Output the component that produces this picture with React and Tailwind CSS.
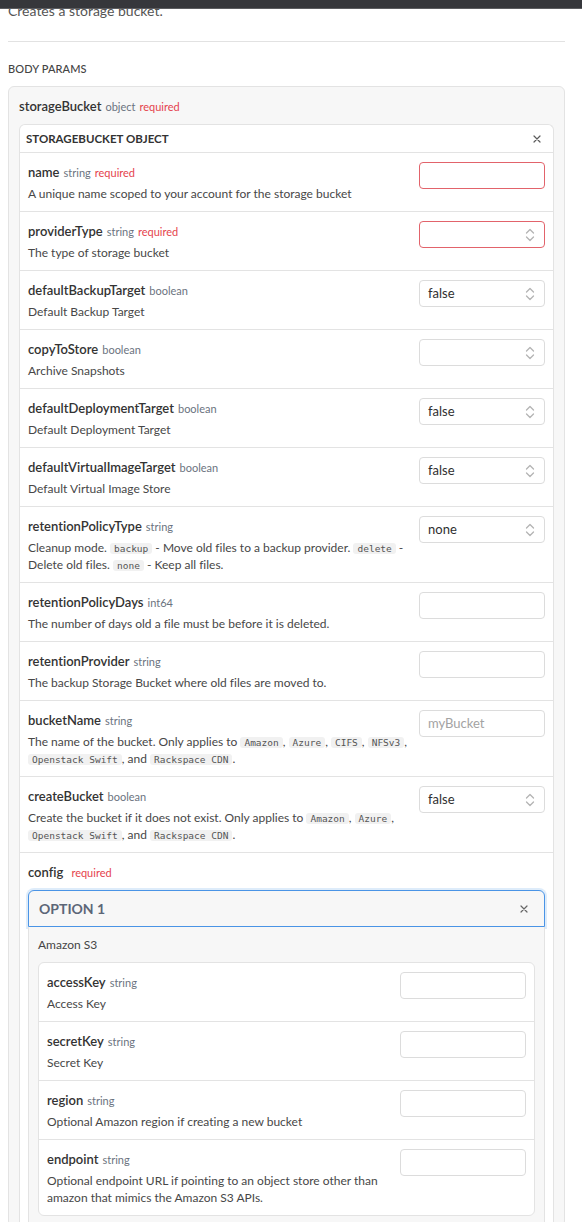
import React from "react";

const FONT = { fontFamily: "Lato, 'Open Sans', sans-serif" };

function Chevrons() {
  return (
    <svg width="10" height="14" viewBox="0 0 10 14" fill="none" stroke="#b4b4b4" strokeWidth="1.3" strokeLinecap="round" strokeLinejoin="round">
      <path d="M1.5 5 L5 1.5 L8.5 5" />
      <path d="M1.5 9 L5 12.5 L8.5 9" />
    </svg>
  );
}

function CloseX({ color = "#5b5b5b" }) {
  return (
    <svg width="8" height="8" viewBox="0 0 8 8" stroke={color} strokeWidth="1.2" strokeLinecap="round">
      <path d="M1 1 L7 7 M7 1 L1 7" />
    </svg>
  );
}

function Code({ children }) {
  return (
    <code
      className="rounded-[3px] bg-[#f1f1f1] px-[4px] py-0 text-[9.5px] leading-none text-[#555]"
      style={{ fontFamily: "'DejaVu Sans Mono', 'Liberation Mono', monospace" }}
    >
      {children}
    </code>
  );
}

function Field({ kind, value, placeholder, required }) {
  const border = required ? "border-[#e2636b]" : "border-[#dcdcdc]";
  return (
    <div
      className={`flex h-[27px] w-[126px] shrink-0 items-center justify-between rounded-[4px] border ${border} bg-white pl-[8px] pr-[9px]`}
    >
      {placeholder ? (
        <span className="text-[13px] text-[#a3a3a3]">{placeholder}</span>
      ) : (
        <span className="text-[13px] text-[#2f2f2f]">{value}</span>
      )}
      {kind === "select" && <Chevrons />}
    </div>
  );
}

function Title({ name, type, required, gap = "ml-[4px]" }) {
  return (
    <div className="h-[20px] text-[13px] leading-[20px]">
      <span className="font-semibold leading-none text-[#333]">{name}</span>
      {type && <span className="ml-[4px] text-[11px] leading-none text-[#6b7380]">{type}</span>}
      {required && <span className={`${gap} text-[11px] leading-none text-[#e5434d]`}>required</span>}
    </div>
  );
}

function Param({ name, type, required, children, field }) {
  return (
    <div className="flex items-start border-t border-[#e3e3e3] pb-[9px] pl-[8px] pr-[8px] pt-[9px]">
      <div className="min-w-0 flex-1 pr-[12px]">
        <Title name={name} type={type} required={required} />
        <div className="mt-[3px] text-[12px] leading-[17px] text-[#474747]">{children}</div>
      </div>
      {field}
    </div>
  );
}

export default function App() {
  return (
    <div
      className="relative h-[1222px] w-[582px] overflow-hidden bg-white [font-variant-ligatures:none]"
      style={FONT}
    >
      {/* window chrome bar over the scrolled content */}
      <div className="absolute left-0 right-0 top-0 z-10 h-[9px] border-b border-[#5c5d60] bg-[#36373b]" />

      <div className="w-[565px] pl-[8px]">
        <p className="mt-[1px] text-[14px] leading-[20px] text-[#555]">Creates a storage bucket.</p>

        <div className="mt-[20px] h-px bg-[#e2e2e2]" />

        <div className="mt-[18px] text-[11px] font-medium uppercase leading-[18px] tracking-[0.01em] text-[#444]">
          Body Params
        </div>

        <div className="mt-[8px] rounded-[6px] border border-[#e3e3e3] bg-[#f7f7f7] px-[10px] pt-[9px]">
          <Title name="storageBucket" type="object" required />

          <div className="mt-[8px] rounded-t-[6px] border border-b-0 border-[#e3e3e3] bg-white">
            <div className="flex h-[27px] items-center justify-between pl-[6px] pr-[12px]">
              <span className="text-[11.5px] font-bold text-[#333]">STORAGEBUCKET OBJECT</span>
              <CloseX />
            </div>

            <Param name="name" type="string" required field={<Field required />}>
              A unique name scoped to your account for the storage bucket
            </Param>
            <Param name="providerType" type="string" required field={<Field kind="select" required />}>
              The type of storage bucket
            </Param>
            <Param name="defaultBackupTarget" type="boolean" field={<Field kind="select" value="false" />}>
              Default Backup Target
            </Param>
            <Param name="copyToStore" type="boolean" field={<Field kind="select" />}>
              Archive Snapshots
            </Param>
            <Param name="defaultDeploymentTarget" type="boolean" field={<Field kind="select" value="false" />}>
              Default Deployment Target
            </Param>
            <Param name="defaultVirtualImageTarget" type="boolean" field={<Field kind="select" value="false" />}>
              Default Virtual Image Store
            </Param>
            <Param name="retentionPolicyType" type="string" field={<Field kind="select" value="none" />}>
              <div>
                Cleanup mode. <Code>backup</Code> - Move old files to a backup provider. <Code>delete</Code> -
              </div>
              <div>
                Delete old files. <Code>none</Code> - Keep all files.
              </div>
            </Param>
            <Param name="retentionPolicyDays" type="int64" field={<Field />}>
              The number of days old a file must be before it is deleted.
            </Param>
            <Param name="retentionProvider" type="string" field={<Field />}>
              The backup Storage Bucket where old files are moved to.
            </Param>
            <Param name="bucketName" type="string" field={<Field placeholder="myBucket" />}>
              <div>
                The name of the bucket. Only applies to <Code>Amazon</Code>, <Code>Azure</Code>, <Code>CIFS</Code>,{" "}
                <Code>NFSv3</Code>,
              </div>
              <div>
                <Code>Openstack Swift</Code>, and <Code>Rackspace CDN</Code>.
              </div>
            </Param>
            <Param name="createBucket" type="boolean" field={<Field kind="select" value="false" />}>
              <div>
                Create the bucket if it does not exist. Only applies to <Code>Amazon</Code>, <Code>Azure</Code>,
              </div>
              <div>
                <Code>Openstack Swift</Code>, and <Code>Rackspace CDN</Code>.
              </div>
            </Param>

            {/* config: one-of selector */}
            <div className="border-t border-[#e3e3e3] px-[8px] pt-[9px]">
              <Title name="config" required gap="ml-[8px]" />

              <div className="mt-[8px] flex h-[37px] items-center justify-between rounded-t-[6px] border border-[#4a94e6] bg-[#f7f7f7] pl-[10px] pr-[16px] shadow-[0_0_0_2px_rgba(74,148,230,0.18)]">
                <span className="text-[14px] font-bold text-[#5c6677]">OPTION 1</span>
                <CloseX color="#666" />
              </div>

              <div className="border-x border-[#e3e3e3] bg-[#f7f7f7] px-[9px] pb-[10px] pt-[8px]">
                <div className="text-[12px] leading-[20px] text-[#454545]">Amazon S3</div>
                <div className="mt-[7px] overflow-hidden rounded-[6px] border border-[#e3e3e3] bg-white [&>div:first-child]:border-t-0">
                  <Param name="accessKey" type="string" field={<Field />}>
                    Access Key
                  </Param>
                  <Param name="secretKey" type="string" field={<Field />}>
                    Secret Key
                  </Param>
                  <Param name="region" type="string" field={<Field />}>
                    Optional Amazon region if creating a new bucket
                  </Param>
                  <Param name="endpoint" type="string" field={<Field />}>
                    <div>Optional endpoint URL if pointing to an object store other than</div>
                    <div>amazon that mimics the Amazon S3 APIs.</div>
                  </Param>
                </div>
              </div>
            </div>
          </div>
        </div>
      </div>
    </div>
  );
}
